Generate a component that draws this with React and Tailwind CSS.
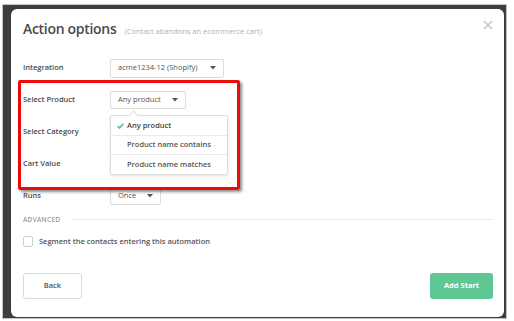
const font = { fontFamily: '"Open Sans", "Liberation Sans", sans-serif' };

const Caret = () => (
  <svg width="6" height="4" viewBox="0 0 6 4" className="shrink-0">
    <path d="M0 0h6L3 3.5z" fill="#555" />
  </svg>
);

const Select = ({ value, w, h = 'h-[19px]' }) => (
  <div
    className={`flex items-center justify-between ${w} ${h} pl-[7px] pr-[7px] border border-[#dcdcdc] rounded-[2px] bg-white text-[7.5px] text-[#555]`}
  >
    <span>{value}</span>
    <Caret />
  </div>
);

const Row = ({ label, children }) => (
  <div className="flex items-center h-[32px]">
    <div className="w-[87px] text-[7.5px] font-semibold text-[#4a4a4a]">{label}</div>
    {children}
  </div>
);

const Dropdown = () => (
  <div className="absolute left-[99px] top-[106px] w-[118px] bg-white border border-[#dedede] rounded-[2px] shadow-[0_1px_3px_rgba(0,0,0,0.12)] text-[7.5px] font-semibold text-[#555]">
    <div className="absolute -top-[4px] left-[19px] w-[7px] h-[7px] bg-white border-l border-t border-[#dedede] rotate-45" />
    <div className="relative flex items-center h-[20px] pl-[6px] gap-[3px] border-b border-[#eaeaea]">
      <svg width="7" height="6" viewBox="0 0 7 6">
        <path d="M0.6 3.2 L2.6 5 L6.4 0.8" fill="none" stroke="#4cc18b" strokeWidth="1.6" />
      </svg>
      <span className="text-[#444]">Any product</span>
    </div>
    <div className="flex items-center h-[19px] pl-[16px] border-b border-[#eaeaea]">Product name contains</div>
    <div className="flex items-center h-[19px] pl-[16px]">Product name matches</div>
  </div>
);

export default function App() {
  return (
    <div className="w-[514px] h-[321px] bg-white pl-[2px] pt-[4px] pr-[7px] pb-[2px]" style={font}>
      <div className="h-full border border-[#c4c4c4] bg-[#3d3d3d] pl-[8px] pt-[4px] pr-[2px] pb-[1px]">
        <div className="relative h-full bg-white rounded-[6px] pl-[12px] pr-[11px] flex flex-col">
          {/* header */}
          <div className="flex items-end justify-between pt-[7px] h-[28px]">
            <div className="flex items-baseline gap-[8px]">
              <span className="text-[14px] font-semibold text-[#4a4a4a] leading-none tracking-[-0.3px]">Action options</span>
              <span className="text-[7.5px] text-[#b0b0b0]">(Contact abandons an ecommerce cart)</span>
            </div>
            <svg width="10" height="10" viewBox="0 0 10 10" className="mb-[7px]">
              <path d="M1 1L9 9M9 1L1 9" stroke="#c8c8c8" strokeWidth="1.6" />
            </svg>
          </div>

          {/* form */}
          <div className="mt-[15px]">
            <Row label="Integration">
              <Select value="acme1234-12 (Shopify)" w="w-[114px]" />
            </Row>
            <Row label="Select Product">
              <Select value="Any product" w="w-[76px]" h="h-[18px]" />
            </Row>
            <Row label="Select Category" />
            <Row label="Cart Value" />
            <Row label="Runs">
              <Select value="Once" w="w-[51px]" h="h-[18px]" />
            </Row>
          </div>

          {/* advanced */}
          <div className="flex items-center h-[15px] gap-[11px]">
            <span className="text-[6.5px] font-semibold tracking-[0.3px] text-[#9a9a9a]">ADVANCED</span>
            <div className="flex-1 h-px bg-[#ececec]" />
          </div>
          <div className="flex items-center h-[29px] gap-[6px]">
            <div className="w-[10px] h-[11px] border border-[#cfcfcf] rounded-[2px]" />
            <span className="text-[7.5px] font-semibold text-[#555]">Segment the contacts entering this automation</span>
          </div>

          {/* footer */}
          <div className="flex justify-between mt-[17px]">
            <button className="w-[59px] h-[26px] border border-[#dadada] rounded-[3px] bg-white text-[7.5px] font-semibold text-[#555]">
              Back
            </button>
            <button className="w-[63px] h-[26px] rounded-[3px] bg-[#5ec794] text-[7.5px] font-bold text-white">
              Add Start
            </button>
          </div>

          {/* annotation */}
          <div className="absolute left-[7px] top-[71px] w-[222px] h-[110px] border-[3px] border-[#ef0a0a] rounded-[2px] shadow-[2px_2px_3px_rgba(0,0,0,0.45)] pointer-events-none" />
          <Dropdown />
        </div>
      </div>
    </div>
  );
}
